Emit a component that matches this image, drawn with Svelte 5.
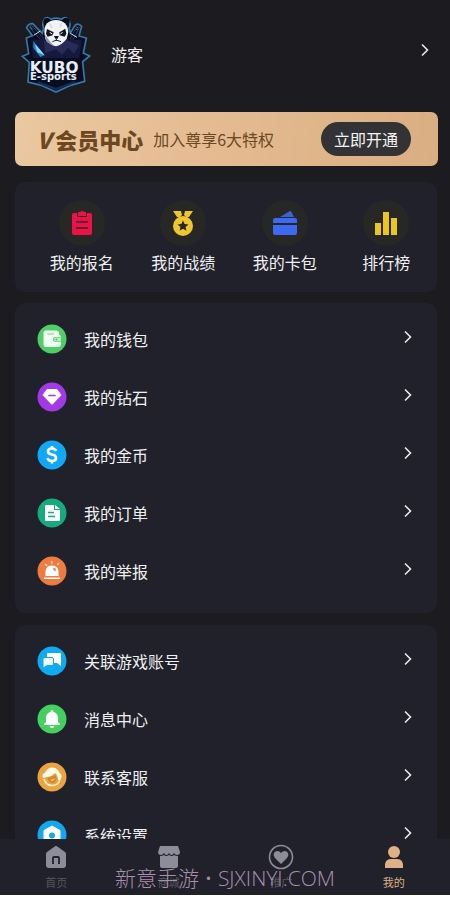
<script lang="ts">
  type Item = { icon: string; label: string; color?: string };

  const shortcuts: Item[] = [
    { icon: "clipboard", label: "我的报名" },
    { icon: "medal", label: "我的战绩" },
    { icon: "cards", label: "我的卡包" },
    { icon: "chart", label: "排行榜" },
  ];

  const groups: Item[][] = [
    [
      { icon: "wallet", label: "我的钱包", color: "#4fce68" },
      { icon: "diamond", label: "我的钻石", color: "#a338e6" },
      { icon: "coin", label: "我的金币", color: "#0fa9f7" },
      { icon: "order", label: "我的订单", color: "#16ab7c" },
      { icon: "alarm", label: "我的举报", color: "#ee7c40" },
    ],
    [
      { icon: "chat", label: "关联游戏账号", color: "#0faaf0" },
      { icon: "bell", label: "消息中心", color: "#45cf5e" },
      { icon: "service", label: "联系客服", color: "#eba441" },
      { icon: "setting", label: "系统设置", color: "#12a9ec" },
    ],
  ];

  const tabs: Item[] = [
    { icon: "home", label: "首页" },
    { icon: "shop", label: "商城" },
    { icon: "heart", label: "推广" },
    { icon: "user", label: "我的" },
  ];

  let current = $state("user");
</script>

{#snippet chevron()}
  <svg class="chevron" width="10" height="14" viewBox="0 0 10 14" aria-hidden="true">
    <path d="M2 1.500L7.500 7L2 12.500" fill="none" stroke="#e9e9ee" stroke-width="1.600" />
  </svg>
{/snippet}

<div class="page">
  <main>
    <button class="profile">
      <svg class="logo" width="70" height="80" viewBox="33 27 210 240" role="img" aria-label="KUBO E-sports">
        <path
          d="M103 43Q110 33 123 43Q138 36 154 43Q166 32 175 44Q184 57 177 69L181 84L197 59Q206 54 215 64L207 93L229 99L220 144L239 153L218 170L224 229L182 241L138 261L94 241L54 231L58 172L37 154L56 146L49 99L67 92L50 68Q55 55 68 56L97 85L101 70Q95 54 103 43Z"
          fill="#090d21"
          stroke="#347aa8"
          stroke-width="5"
        />
        <path d="M60 63L98 103M205 65L184 104" stroke="#5d7189" stroke-width="10" />
        <path d="M60 63L98 103M205 65L184 104" stroke="#0b1128" stroke-width="8" />
        <path d="M60 65L69 74M204 67L198 78" stroke="#7d91a5" stroke-width="4" stroke-dasharray="3 3" />
        <path d="M71 91L91 78M181 85L201 97" stroke="#d2dde8" stroke-width="3" />
        <path d="M63 106L105 101L135 122L169 103L216 106L208 159H70Z" fill="#15193b" />
        <path d="M70 108L104 151L91 156L70 129Z" fill="#2784bd" />
        <path d="M75 118L93 137L104 151L82 142Z" fill="#8cd7f2" />
        <path d="M101 105Q132 134 170 106L207 121L192 146L174 128L156 149L138 133L106 145Z" fill="#282b5a" />
        <circle cx="111" cy="50" r="11" fill="#070b19" />
        <circle cx="168" cy="50" r="11" fill="#070b19" />
        <path d="M103 81Q102 47 138 45Q173 47 175 81L170 102Q154 121 138 124Q119 121 106 102Z" fill="#f0f2f4" />
        <path d="M103 86L110 111L132 123L117 106Z" fill="#8997aa" />
        <path d="M111 72L131 82L128 91L113 95L108 86ZM166 71L148 82L149 91L164 95L169 86Z" fill="#111522" />
        <path d="M119 82L127 87M158 82L151 87" stroke="#fff" stroke-width="3" />
        <path d="M132 93H146L143 101H136Z" fill="#0d1120" />
        <path d="M139 101V108M127 110Q139 101 153 110" fill="none" stroke="#172035" stroke-width="3" />
        <path d="M119 55L126 69M155 54L150 67" stroke="#aab6c4" stroke-width="2" />
        <path d="M83 232L138 252L195 231" fill="none" stroke="#192b54" stroke-width="7" />
        <text x="59" y="203" class="logo-name">KUBO</text>
        <text x="60" y="226" class="logo-sub">E-sports</text>
      </svg>
      <span class="name">游客</span>
      {@render chevron()}
    </button>

    <section class="vip">
      <h2><em>V</em>会员中心</h2>
      <p>加入尊享6大特权</p>
      <button>立即开通</button>
    </section>

    <nav class="card shortcuts" aria-label="快捷入口">
      {#each shortcuts as item (item.icon)}
        <button>
          <span class="disc">
            <svg width="24" height="26" viewBox="0 0 24 26" aria-hidden="true">
              {#if item.icon === "clipboard"}
                <path d="M3 3H7V7H17V3H20Q22 3 22 5V23Q22 25 20 25H4Q2 25 2 23V5Q2 3 4 3Z" fill="#eb1247" />
                <path d="M8 2H10Q12 0 14 2H16V6H8Z" fill="#eb1247" />
                <path d="M6 12H18M6 18H18" stroke="#40212a" stroke-width="1.500" />
              {:else if item.icon === "medal"}
                <path d="M2 1H10L11 5L9 7H6ZM14 1H22L18 7H15L13 5Z" fill="#edc72c" />
                <circle cx="12" cy="16" r="10" fill="#edc72c" />
                <path d="M12 10.500L13.600 14L17.500 14.400L14.600 17L15.400 20.700L12 18.800L8.600 20.700L9.400 17L6.500 14.400L10.400 14Z" fill="#292719" />
              {:else if item.icon === "cards"}
                <path d="M7 7L17 1Q18 1 18.500 2L21 7Z" fill="#3a62dc" />
                <path d="M0 13V10Q0 8 2 8H22Q24 8 24 10V13ZM0 15H24V23Q24 25 22 25H2Q0 25 0 23Z" fill="#3d6af0" />
              {:else}
                <path d="M1 13H7V25H1ZM9 2H15V25H9ZM17 8H23V25H17Z" fill="#eac61e" />
              {/if}
            </svg>
          </span>
          {item.label}
        </button>
      {/each}
    </nav>

    {#each groups as group}
      <ul class="card menu">
        {#each group as item (item.icon)}
          <li>
            <button>
              <svg class="round" width="30" height="30" viewBox="0 0 30 30" aria-hidden="true">
                <circle cx="15" cy="15" r="14.500" fill={item.color} />
                {#if item.icon === "wallet"}
                  <path d="M8 6.500H19Q22 6.500 22 9V10.500Q24 11 24 13H19Q16 13 16 15.500T19 18H24V20Q24 23 21 23H9Q6.500 23 6.500 20.500V8.500Q6.500 7 8 6.500Z" fill="#effff0" />
                  <path d="M10 10H17" stroke="#81c98d" stroke-width="1" />
                  <path d="M19 13.500H24V17.500H19Q17 17.500 17 15.500T19 13.500Z" fill="#b8edbf" />
                  <circle cx="19.500" cy="15.500" r="1" fill="#4fce68" />
                {:else if item.icon === "diamond"}
                  <path d="M10 7H20L24.500 13L15.500 22.500H14.500L5.500 13Z" fill="#fff" />
                  <path d="M12 13.500H18" stroke="#a338e6" stroke-width="1.700" stroke-linecap="round" />
                {:else if item.icon === "coin"}
                  <path d="M19 11Q18 8.500 15 8.500Q11 8.500 11 11.500Q11 14 15 14.500Q19 15 19 18Q19 21 15 21Q11 21 10.500 18M15 6V9M15 20.500V23.500" fill="none" stroke="#fff" stroke-width="2.600" />
                {:else if item.icon === "order"}
                  <path d="M9 7H17V12H23V22Q23 23 22 23H9Q8 23 8 22V8Q8 7 9 7ZM18 7L23 11H18Z" fill="#fff" />
                  <path d="M11 14.500H17M11 18.500H18" stroke="#16ab7c" stroke-width="1.400" />
                {:else if item.icon === "alarm"}
                  <path d="M8.500 20V15Q9 9.500 15 9.500Q21 9.500 21.500 15V20ZM7 21.500H23V23H7Z" fill="#fff" />
                  <path d="M16 13H18V15" fill="none" stroke="#ee7c40" stroke-width="1.500" />
                  <path d="M8 8L10 10M14.500 5L15 7.500M22 7L20.500 9" stroke="#ffd1b5" stroke-width="1.600" />
                {:else if item.icon === "chat"}
                  <path d="M11 7H23Q24 7 24 8V20L20 17H11Q10 17 10 16V8Q10 7 11 7Z" fill="#fff" />
                  <path d="M7 11.500H15Q16.500 11.500 16.500 13V18Q16.500 19.500 15 19.500H10L6 22V13Q6 11.500 7 11.500Z" fill="#f2fcff" stroke={item.color} stroke-width="1" />
                {:else if item.icon === "bell"}
                  <path d="M13.500 8Q13.500 6 15 6T16.500 8Q21 9 21 14V18L23 20V21H7V20L9 18V14Q9 9 13.500 8ZM12.500 22H17.500Q17 24 15 24T12.500 22Z" fill="#fff" />
                {:else if item.icon === "service"}
                  <path d="M7 16Q5 16 5.500 13Q6 11 8 11Q10 5.500 15.500 5.500Q21 6 22.500 11Q25 12 24.500 15Q24 18 21 18Q21 13 18 11Q14 15 9.500 15Z" fill="#fff9e8" />
                  <path d="M10.500 16L18.500 13L20 17Q18 22 14.500 21Q11 20 10.500 16Z" fill="#d08a33" />
                  <path d="M7 17Q9 24 16 23.500Q22 23 23 17" fill="none" stroke="#fff4d6" stroke-width="1.500" />
                  <path d="M14 18Q16 19 17.500 17" fill="none" stroke="#ffe5ae" stroke-width="1" />
                {:else}
                  <path d="M15 6L23 10.500V20L15 24.500L7 20V10.500Z" fill="#fff" stroke="#fff" stroke-linejoin="round" />
                  <circle cx="15" cy="15.500" r="3" fill={item.color} />
                {/if}
              </svg>
              <span>{item.label}</span>
              {@render chevron()}
            </button>
          </li>
        {/each}
      </ul>
    {/each}
  </main>

  <nav class="tabs" aria-label="主导航">
    {#each tabs as tab (tab.icon)}
      <button class:active={current === tab.icon} onclick={() => (current = tab.icon)}>
        <svg width="26" height="26" viewBox="0 0 26 26" aria-hidden="true">
          {#if tab.icon === "home"}
            <path d="M13 2Q14 2 15 3L22 8Q23 9 23 10V21Q23 24 20 24H6Q3 24 3 21V10Q3 9 4 8L11 3Q12 2 13 2Z" fill="currentColor" />
            <path d="M10 20V14Q10 13 11 13H15Q16 13 16 14V20" fill="none" stroke="#20212a" stroke-width="1.800" />
          {:else if tab.icon === "shop"}
            <path d="M4 2H22L24 8Q24 11 21 11Q19 11 18 9Q17 11 15.500 11Q14 11 13 9Q12 11 10.500 11Q9 11 8 9Q7 11 5 11Q2 11 2 8Z" fill="currentColor" />
            <path d="M4 12Q7 12 8 11Q10 13 13 11Q16 13 18 11Q19 12 22 12V22Q22 24 20 24H6Q4 24 4 22Z" fill="currentColor" />
          {:else if tab.icon === "heart"}
            <circle cx="13" cy="13" r="11.500" fill="none" stroke="currentColor" stroke-width="1.600" />
            <path d="M13 20L7 14Q4 10 7.500 7.500Q10.500 6 13 9Q15.500 6 18.500 7.500Q22 10 19 14Z" fill="currentColor" />
          {:else}
            <circle cx="13" cy="8" r="6" fill="currentColor" />
            <path d="M4 24Q3 15 10 15H16Q23 15 22 24Z" fill="currentColor" />
          {/if}
        </svg>
        {tab.label}
      </button>
    {/each}
    <div class="watermark">新意手游 • SJXINYI.COM</div>
  </nav>
</div>

<style>
  :global(body) {
    background: #fff;
  }

  .page {
    box-sizing: border-box;
    height: 100vh;
    padding-bottom: 5px;
    display: flex;
    flex-direction: column;
    background: #1c1b1f;
    background-clip: content-box;
    color: #f0f0f2;
    font: 16px/24px "Noto Sans CJK SC", sans-serif;
  }

  main {
    flex: 1;
    min-height: 0;
    overflow-y: auto;
    scrollbar-width: none;
    padding: 0 12px 0 15px;
  }

  button {
    border: 0;
    padding: 0;
    background: none;
    color: inherit;
    font: inherit;
    text-align: left;
    cursor: pointer;
  }

  .profile {
    width: 100%;
    height: 112px;
    padding: 0 8px 4px 6px;
    display: flex;
    align-items: center;
    gap: 20px;
  }

  .profile .chevron {
    margin-bottom: 8px;
  }

  .name {
    flex: 1;
  }

  .logo-name,
  .logo-sub {
    fill: #e8edf4;
    stroke: #0a0f26;
    stroke-width: 4px;
    paint-order: stroke;
    font: bold 46px "DejaVu Sans", sans-serif;
  }

  .logo-sub {
    font-size: 30px;
  }

  .vip {
    height: 54px;
    box-sizing: border-box;
    padding: 0 27px 0 22px;
    display: flex;
    align-items: center;
    border-radius: 7px;
    background: linear-gradient(100deg, #eac8a0, #e3b98f 55%, #d9ae82);
    color: #6b4821;
  }

  .vip h2 {
    margin: 0 10px 0 0;
    font-size: 22px;
    font-weight: 900;
    white-space: nowrap;
  }

  .vip em {
    margin-right: 4px;
  }

  .vip p {
    flex: 1;
    margin: 0;
    white-space: nowrap;
  }

  .vip button {
    height: 34px;
    padding: 0 13px;
    border-radius: 17px;
    background: #333335;
    color: #f4f4f4;
    white-space: nowrap;
  }

  .card {
    margin: 0 1px 12px 0;
    border-radius: 10px;
    background: #20212a;
  }

  .shortcuts {
    height: 110px;
    box-sizing: border-box;
    margin: 16px 1px 11px 0;
    padding: 18px 0 0 16px;
    display: grid;
    grid-template-columns: repeat(4, 1fr);
    align-items: start;
  }

  .shortcuts button {
    display: flex;
    flex-direction: column;
    align-items: center;
    gap: 4px;
  }

  .disc {
    width: 46px;
    height: 46px;
    display: grid;
    place-items: center;
    border-radius: 50%;
    background: #272726;
  }

  .menu {
    padding: 7px 0 13px;
    list-style: none;
  }

  .menu button {
    width: 100%;
    height: 58px;
    padding: 0 24px 0 22px;
    display: flex;
    align-items: center;
    gap: 17px;
  }

  .menu span {
    flex: 1;
  }

  .menu .chevron {
    margin-bottom: 4px;
  }

  .tabs {
    position: relative;
    height: 56px;
    display: grid;
    grid-template-columns: repeat(4, 1fr);
    background: #20212a;
  }

  .tabs button {
    display: flex;
    flex-direction: column;
    align-items: center;
    justify-content: center;
    gap: 4px;
    color: #55555d;
    font-size: 11px;
    line-height: 16px;
  }

  .tabs svg {
    color: #8d8d99;
  }

  .tabs .active,
  .tabs .active svg {
    color: #deb284;
  }

  .watermark {
    position: absolute;
    inset: 24px 0 auto;
    text-align: center;
    color: #a98fae;
    font: 21px/30px "Open Sans", "Noto Sans CJK SC", sans-serif;
    font-weight: 300;
    pointer-events: none;
  }
</style>
